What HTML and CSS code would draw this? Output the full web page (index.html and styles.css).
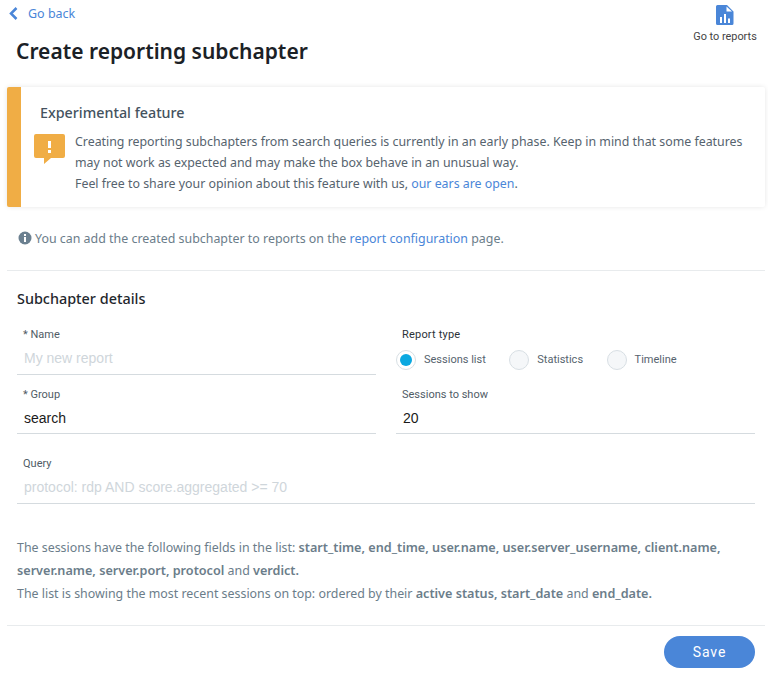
FILE: index.html
```html
<!DOCTYPE html>
<html lang="en">
<head>
<meta charset="utf-8">
<title>Create reporting subchapter</title>
<link rel="stylesheet" href="styles.css">
</head>
<body>
<div class="page">
  <header class="top">
    <div class="top-left">
      <a class="back" href="#">
        <svg class="back-icon" width="9" height="13" viewBox="0 0 9 13"><path d="M7.500 1 2 6.500 7.500 12" fill="none" stroke="#4a86d8" stroke-width="2.500"/></svg>
        <span>Go back</span>
      </a>
      <h1 class="title">Create reporting subchapter</h1>
    </div>
    <a class="reports" href="#">
      <svg width="18" height="20" viewBox="0 0 18 20"><path fill="#4a86d8" d="M1.5 0H11l6.500 6.500V18.500a1.500 1.500 0 0 1-1.500 1.500H1.500A1.500 1.500 0 0 1 0 18.500V1.500A1.500 1.500 0 0 1 1.500 0z"/><path fill="#fff" d="M10.500 1.500 16 6.500h-5.500z"/><path fill="#fff" d="M4 12h2v6H4zM8 9h2v9H8zM12 13.500h2V18h-2z"/></svg>
      <span>Go to reports</span>
    </a>
  </header>

  <section class="alert">
    <h2 class="alert-title">Experimental feature</h2>
    <div class="alert-body">
      <svg class="alert-icon" width="31" height="31" viewBox="0 0 31 31"><path fill="#f0ad45" d="M2 0h27a2 2 0 0 1 2 2v20a2 2 0 0 1-2 2H17l-7 6v-6H2a2 2 0 0 1-2-2V2a2 2 0 0 1 2-2z"/><path fill="#fff" d="M14 7h3v7h-3zM14 16h3v3h-3z"/></svg>
      <p class="alert-text">Creating reporting subchapters from search queries is currently in an early phase. Keep in mind that some features may not work as expected and may make the box behave in an unusual way.<br>Feel free to share your opinion about this feature with us, <a href="#">our ears are open</a>.</p>
    </div>
  </section>

  <p class="info">
    <svg width="14" height="14" viewBox="0 0 14 14"><circle cx="7" cy="7" r="6.500" fill="#6b8090"/><path fill="#fff" d="M6 6h2v5H6zM6 3h2v2H6z"/></svg>
    <span>You can add the created subchapter to reports on the <a href="#">report configuration</a> page.</span>
  </p>

  <form class="details">
    <h2 class="details-title">Subchapter details</h2>
    <div class="grid">
      <div class="field">
        <span class="label"><i>*</i> Name</span>
        <span class="value placeholder">My new report</span>
      </div>
      <div class="field plain">
        <span class="label dark">Report type</span>
        <div class="radios">
          <span class="radio on"><b></b>Sessions list</span>
          <span class="radio"><b></b>Statistics</span>
          <span class="radio"><b></b>Timeline</span>
        </div>
      </div>
      <div class="field">
        <span class="label"><i>*</i> Group</span>
        <span class="value">search</span>
      </div>
      <div class="field">
        <span class="label">Sessions to show</span>
        <span class="value">20</span>
      </div>
      <div class="field wide">
        <span class="label">Query</span>
        <span class="value placeholder">protocol: rdp AND score.aggregated &gt;= 70</span>
      </div>
    </div>
    <p class="notes">The sessions have the following fields in the list: <b>start_time, end_time, user.name, user.server_username, client.name, server.name, server.port, protocol</b> and <b>verdict.</b><br>The list is showing the most recent sessions on top: ordered by their <b>active status, start_date</b> and <b>end_date.</b></p>
  </form>

  <footer class="foot">
    <button class="save" type="button">Save</button>
  </footer>
</div>
</body>
</html>
```
FILE: styles.css
```css
* { box-sizing: border-box; }
html, body { margin: 0; padding: 0; background: #fff; }
body { font-family: "Noto Sans", sans-serif; color: #5a6b78; }
a { color: #4a86d8; text-decoration: none; }
.page { width: 768px; height: 674px; padding: 0 3px 0 7px; overflow: hidden; }

.top { display: flex; justify-content: space-between; height: 87px; }
.top-left { padding-top: 4px; }
.back { display: flex; align-items: center; gap: 10px; height: 18px; padding-left: 2px; font-size: 12.500px; }
.title { margin: 14px 0 0 9px; font-size: 21px; line-height: 30px; font-weight: 600; color: #1b2126; }
.reports { display: flex; flex-direction: column; align-items: center; gap: 5px; width: 64px; margin: 5px 8px 0 0; font: 10.900px/14px Roboto, sans-serif; color: #444; white-space: nowrap; }

.alert { height: 120px; border-left: 14px solid #f0ad45; border-radius: 2px; background: #fff; box-shadow: 0 0 5px rgba(0,0,0,.1); padding: 16px 20px 0 19px; }
.alert-title { margin: 0; font-size: 14.300px; line-height: 20px; font-weight: 500; color: #44525e; }
.alert-body { display: flex; gap: 10px; margin-top: 8px; margin-left: -6px; }
.alert-icon { flex: none; margin-top: 3px; }
.alert-text { margin: 0; font-size: 12.360px; line-height: 21px; color: #56636e; }

.info { display: flex; align-items: center; gap: 3px; height: 64px; margin: 0; padding: 0 0 1px 11px; font-size: 12.420px; color: #6b7d8a; border-bottom: 1px solid #e8ebed; }

.details { padding: 0 10px; }
.details-title { margin: 18px 0 0; font-size: 14.400px; line-height: 20px; font-weight: 500; color: #1f272d; }
.grid { display: grid; grid-template-columns: 359px 359px; grid-template-rows: 49px 48px 59px; column-gap: 20px; row-gap: 11px; margin-top: 17px; }
.field { display: flex; flex-direction: column; padding-top: 1px; border-bottom: 1px solid #d5dbdf; }
.field.plain { border-bottom: 0; }
.field.wide { grid-column: 1 / 3; margin-top: 10px; }
.label { padding: 0 6px; font: 11px/16px Roboto, sans-serif; color: #505c66; height: 16px; }
.label.dark { color: #2b3238; letter-spacing: .2px; }
.label i { font-style: normal; }
.value { padding: 0 7px; margin-top: 6px; font: 14px/18px "Liberation Sans", sans-serif; color: #1a1a1a; }
.placeholder { color: #cfd6db; }
.radios { display: flex; align-items: center; margin-top: 7px; font: 11px/18px Roboto, sans-serif; color: #56636e; }
.radio { display: flex; align-items: center; gap: 8px; margin-right: 23.500px; }
.radio b { display: block; width: 20px; height: 20px; border: 1px solid #d8dfe4; border-radius: 50%; background: #f5f7f9; }
.radio.on b { background: #fff; position: relative; }
.radio.on b::after { content: ""; position: absolute; left: 3px; top: 3px; width: 12px; height: 12px; border-radius: 50%; background: #0aa8e0; }

.notes { margin: 32px 0 0; font-size: 12.400px; line-height: 23px; color: #6b7d8a; }
.notes b { font-size: 12.650px; font-weight: 600; }

.foot { display: flex; justify-content: flex-end; height: 49px; margin-top: 20px; padding: 10px 10px 0 0; border-top: 1px solid #e8ebed; }
.save { width: 91px; height: 32px; border: 0; border-radius: 16px; background: #4a86d8; color: #fff; font: 14px Roboto, sans-serif; letter-spacing: .9px; }
```
